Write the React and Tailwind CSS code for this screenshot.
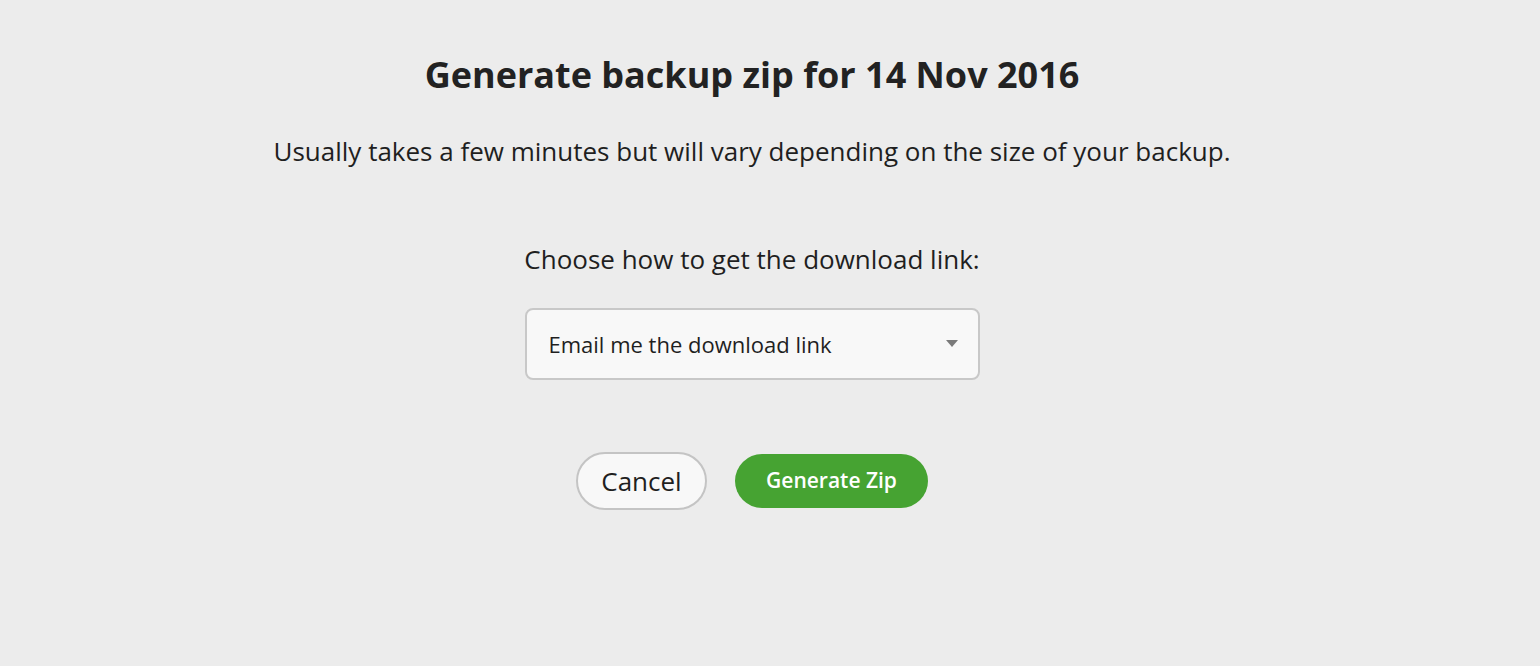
import React from 'react';

const App = () => {
  return (
    <div className="min-h-[666px] w-full bg-[#ececec] pr-[36px] text-[#1f1f1f]" style={{ fontFamily: '"Open Sans", sans-serif' }}>
      <div className="flex flex-col items-center pt-[51px]">
        <h1 className="text-[36px] font-bold leading-[48px] text-[#222]">Generate backup zip for 14 Nov 2016</h1>
        <p className="mt-[34px] text-[26px] leading-[36px]">Usually takes a few minutes but will vary depending on the size of your backup.</p>

        <p className="mt-[72px] text-[26px] leading-[36px]">Choose how to get the download link:</p>

        <div className="mt-[31px] flex h-[72px] w-[455px] items-center justify-between rounded-lg border-2 border-[#c8c8c8] bg-[#f8f8f8] pl-[22px] pr-[20px]">
          <span className="text-[22px]">Email me the download link</span>
          <svg width="12" height="8" viewBox="0 0 12 8"><path d="M0 0h12L6 7z" fill="#7a7a7a" /></svg>
        </div>

        <div className="mt-[72px] flex items-center gap-[28px]">
          <button className="h-[58px] w-[131px] rounded-full border-2 border-[#c4c4c4] bg-[#f8f8f8] text-[26px] text-[#1f1f1f]">Cancel</button>
          <button className="h-[54px] w-[193px] rounded-full bg-[#46a332] text-[21px] font-semibold text-white">Generate Zip</button>
        </div>
      </div>
    </div>
  );
};

export default App;
